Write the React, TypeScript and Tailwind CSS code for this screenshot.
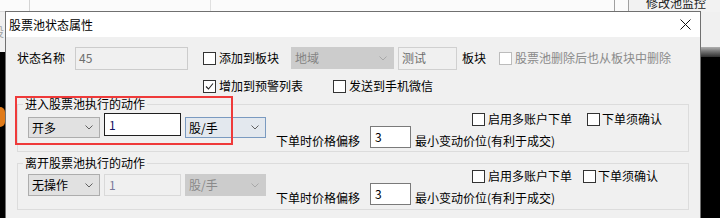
import React from "react";

const Check = ({ checked = false, disabled = false }: { checked?: boolean; disabled?: boolean }) => (
  <span
    className={
      "relative inline-block w-[13px] h-[13px] shrink-0 border bg-white " +
      (disabled ? "border-[#bcbcbc]" : "border-[#333333]")
    }
  >
    {checked && (
      <svg className="absolute left-[1px] top-[1px]" width="9" height="9" viewBox="0 0 9 9">
        <path d="M1 4.5 L3.5 7 L8 1.5" fill="none" stroke="#222" strokeWidth="1.1" />
      </svg>
    )}
  </span>
);

const Chevron = ({ color = "#606060" }: { color?: string }) => (
  <svg width="8" height="5" viewBox="0 0 8 5" className="shrink-0">
    <path d="M0.5 0.5 L4 4 L7.5 0.5" fill="none" stroke={color} strokeWidth="1" />
  </svg>
);

export default function App() {
  const font = "font-['Noto_Sans_CJK_SC','Microsoft_YaHei',sans-serif]";
  return (
    <div className={"relative w-[720px] h-[218px] overflow-hidden bg-black text-[12px] leading-[16px] text-black " + font}>
      {/* background application */}
      <div className="absolute left-0 top-0 w-[720px] h-[12px] bg-[#fbfbfb] border-b border-[#d8d8d8]">
        <div className="absolute left-[29px] top-0 h-[12px] w-px bg-[#d4d4d4]" />
        <div className="absolute left-[210px] top-0 h-[12px] w-px bg-[#e0e0e0]" />
        <div className="absolute left-[614px] top-0 h-[12px] w-px bg-[#a0a0a0]" />
        <div className="absolute left-[628px] top-0 h-[12px] w-[92px] bg-[#f2f2f2] border-l border-[#a0a0a0]" />
        <div className="absolute left-[646px] top-[-5px] text-[12px] leading-[16px] text-[#222]">修改池监控</div>
      </div>
      <div className="absolute left-0 top-[12px] w-[5px] h-[40px] bg-[#f0f0f0] overflow-hidden">
        <span className="absolute left-[-8px] top-[12px] text-[#a0a0a0]">设</span>
      </div>
      <div className="absolute left-0 top-[107px] w-[5px] h-[20px] rounded-r-full bg-[#e07b1a]" />
      <div className="absolute left-[701px] top-[12px] w-[19px] h-[35px] bg-[#f0f0f0]" />
      <div className="absolute left-[701px] top-[47px] w-[19px] h-[10px] bg-gradient-to-b from-[#b0b0b0] to-[#303030]" />

      {/* dialog */}
      <div className="absolute left-[5px] top-[11px] w-[696px] h-[220px] border border-[#707070] bg-[#f0f0f0]">
        <div className="flex h-[25px] items-center justify-between bg-white pl-[3px] pr-[9px]">
          <span className="text-[12px]">股票池状态属性</span>
          <svg width="11" height="11" viewBox="0 0 11 11">
            <path d="M0.5 0.5 L10.5 10.5 M10.5 0.5 L0.5 10.5" stroke="#111" strokeWidth="1" />
          </svg>
        </div>

        {/* row 1 */}
        <div className="mt-[9px] flex h-[24px] items-center pl-[11px]">
          <span>状态名称</span>
          <div className="ml-[10px] flex h-[23px] w-[113px] items-center border border-[#cccccc] bg-[#f0f0f0] pl-[3px] text-[#6d6d6d]">45</div>
          <div className="ml-[15px] flex items-center">
            <Check />
            <span className="ml-[3px]">添加到板块</span>
          </div>
          <div className="ml-[12px] flex h-[22px] w-[103px] items-center justify-between border border-[#cccccc] bg-[#cccccc] pl-[3px] pr-[6px] text-[#838383]">
            <span>地域</span>
            <Chevron color="#a8a8a8" />
          </div>
          <div className="ml-[4px] flex h-[23px] w-[59px] items-center border border-[#d0d0d0] bg-[#f0f0f0] pl-[3px] text-[#6d6d6d]">测试</div>
          <span className="ml-[5px]">板块</span>
          <div className="ml-[13px] flex items-center text-[#8a8a8a]">
            <Check disabled />
            <span className="ml-[3px]">股票池删除后也从板块中删除</span>
          </div>
        </div>

        {/* row 2 */}
        <div className="mt-[9px] flex h-[14px] items-center pl-[197px]">
          <Check checked />
          <span className="ml-[3px]">增加到预警列表</span>
          <div className="ml-[30px] flex items-center">
            <Check />
            <span className="ml-[3px]">发送到手机微信</span>
          </div>
        </div>

        {/* group 1 */}
        <fieldset className="ml-[11px] mt-[3px] h-[56px] w-[672px] border border-[#dcdcdc] p-0">
          <legend className="ml-[5px] px-[2px] leading-[16px]">进入股票池执行的动作</legend>
          <div className="flex items-start pl-[10px]">
            <div className="mt-[5px] flex h-[21px] w-[72px] items-center justify-between border border-[#adadad] bg-[#e1e1e1] pl-[3px] pr-[6px]">
              <span>开多</span>
              <Chevron />
            </div>
            <div className="ml-[4px] mt-[1px] flex h-[23px] w-[77px] items-center border border-[#1f1f1f] bg-white pl-[4px] text-[#101060]">1</div>
            <div className="ml-[4px] mt-[5px] flex h-[21px] w-[81px] items-center justify-between border border-[#7a9ac0] bg-[#e3e8ee] pl-[3px] pr-[6px]">
              <span>股/手</span>
              <Chevron />
            </div>
            <div className="ml-[10px] flex flex-col">
              <div className="flex h-[14px] items-center pl-[196px]">
                <Check />
                <span className="ml-[3px]">启用多账户下单</span>
                <div className="ml-[15px] flex items-center">
                  <Check />
                  <span className="ml-[2px]">下单须确认</span>
                </div>
              </div>
              <div className="flex items-start">
                <span className="mt-[7px]">下单时价格偏移</span>
                <div className="ml-[10px] flex h-[22px] w-[41px] items-center border border-[#7a7a7a] bg-white pl-[4px]">3</div>
                <span className="ml-[4px] mt-[7px]">最小变动价位(有利于成交)</span>
              </div>
            </div>
          </div>
        </fieldset>

        {/* group 2 */}
        <fieldset className="ml-[11px] mt-[3px] h-[55px] w-[672px] border border-[#dcdcdc] p-0">
          <legend className="ml-[5px] px-[2px] leading-[16px]">离开股票池执行的动作</legend>
          <div className="flex items-start pl-[10px]">
            <div className="mt-[3px] flex h-[22px] w-[72px] items-center justify-between border border-[#adadad] bg-[#e1e1e1] pl-[3px] pr-[6px]">
              <span>无操作</span>
              <Chevron />
            </div>
            <div className="ml-[4px] mt-[3px] flex h-[22px] w-[77px] items-center border border-[#d9d9d9] bg-[#f0f0f0] pl-[4px] text-[#7a7a9a]">1</div>
            <div className="ml-[4px] mt-[3px] flex h-[22px] w-[81px] items-center justify-between border border-[#cccccc] bg-[#cccccc] pl-[3px] pr-[6px] text-[#8a8a8a]">
              <span>股/手</span>
              <Chevron color="#a8a8a8" />
            </div>
            <div className="-mt-[2px] ml-[10px] flex flex-col">
              <div className="flex h-[14px] items-center pl-[196px]">
                <Check />
                <span className="ml-[3px]">启用多账户下单</span>
                <div className="ml-[11px] flex items-center">
                  <Check />
                  <span className="ml-[2px]">下单须确认</span>
                </div>
              </div>
              <div className="flex items-start">
                <span className="mt-[7px]">下单时价格偏移</span>
                <div className="ml-[10px] flex h-[22px] w-[41px] items-center border border-[#7a7a7a] bg-white pl-[4px]">3</div>
                <span className="ml-[4px] mt-[7px]">最小变动价位(有利于成交)</span>
              </div>
            </div>
          </div>
        </fieldset>

        {/* red annotation */}
        <div className="pointer-events-none absolute left-[9px] top-[84px] h-[49px] w-[218px] border-2 border-[#ef3a3a]" />
      </div>
    </div>
  );
}
